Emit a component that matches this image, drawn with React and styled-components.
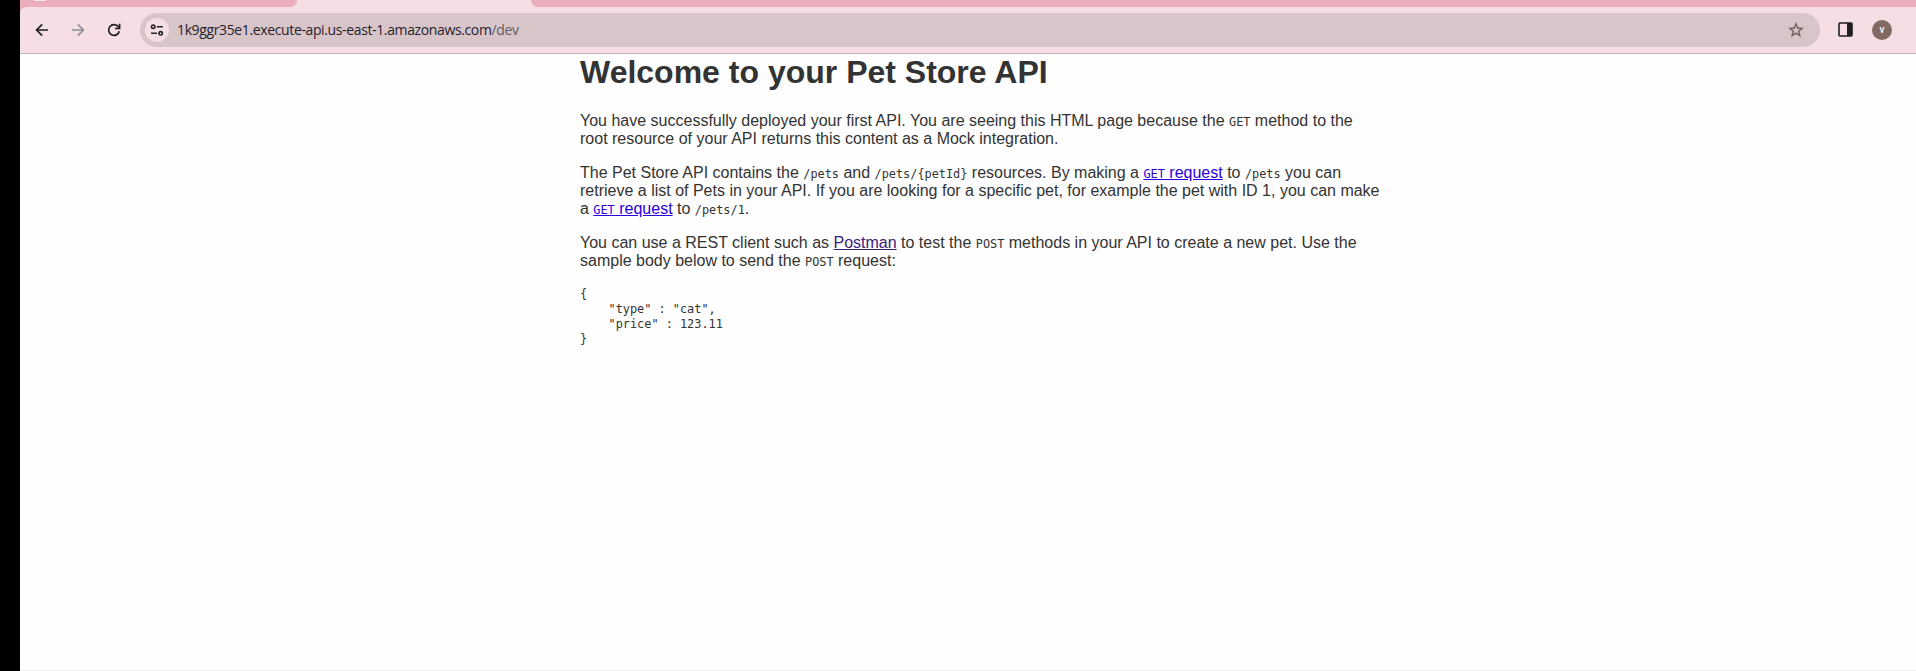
import React from "react";
import styled, { createGlobalStyle } from "styled-components";

const Global = createGlobalStyle`
  html, body { margin: 0; padding: 0; background: #fefefe; overflow: hidden; }
  * { box-sizing: border-box; }
`;

const Screen = styled.div`
  display: flex;
  width: 1916px;
  height: 671px;
  background: #000;
`;

const Browser = styled.div`
  display: flex;
  flex-direction: column;
  flex: 1;
  margin-left: 20px;
  background: #fefefe;
  border-bottom: 1px solid #efefef;
`;

const TabStrip = styled.div`
  display: flex;
  justify-content: space-between;
  height: 7px;
  background: #f6dfe4;
`;

const InactiveTabs = styled.div`
  width: ${(p) => p.$width}px;
  background: #e9adbc;
  border-radius: ${(p) => (p.$side === "left" ? "0 0 10px 0" : "0 0 0 10px")};
`;

const TabMark = styled.div`
  width: 12px;
  height: 1px;
  margin-left: 14px;
  background: #f8e6ea;
`;

const ToolbarBack = styled.div`
  background: linear-gradient(90deg, #e9adbc 12px, #f6dfe4 12px);
`;

const Toolbar = styled.div`
  display: flex;
  align-items: center;
  height: 47px;
  padding: 0 24px 1px 12px;
  background: #f6dfe4;
  border-bottom: 1px solid #c3b2b6;
  border-radius: 6px 0 0 0;
`;

const ToolButton = styled.div`
  display: flex;
  align-items: center;
  justify-content: center;
  width: 20px;
  height: 20px;
  margin-right: ${(p) => p.$gap ?? 16}px;
  color: ${(p) => p.$color || "#1f1f23"};
`;

const AddressBar = styled.div`
  display: flex;
  align-items: center;
  flex: 1;
  height: 34px;
  padding: 0 14px 0 5px;
  border-radius: 17px;
  background: #d8c5c9;
`;

const SiteInfo = styled.div`
  display: flex;
  align-items: center;
  justify-content: center;
  width: 24px;
  height: 24px;
  border-radius: 50%;
  background: #f6dfe4;
`;

const Url = styled.div`
  flex: 1;
  margin-left: 8px;
  font: 14px/20px "Open Sans", sans-serif;
  letter-spacing: -0.37px;
  color: #25222b;
  white-space: nowrap;
`;

const UrlPath = styled.span`
  color: #625c66;
`;

const SideTools = styled.div`
  display: flex;
  align-items: center;
  gap: 19px;
  margin-left: 18px;
`;

const Avatar = styled.div`
  width: 20px;
  height: 20px;
  border-radius: 50%;
  background: #806a61;
  color: #fff;
  font: 500 10px/19px Roboto, sans-serif;
  text-align: center;
`;

const Page = styled.main`
  width: 800px;
  margin-left: 560px;
  font: 16px/18px "Liberation Sans", Arial, sans-serif;
  color: #333;
`;

const Title = styled.h1`
  margin: 0 0 22px;
  font-size: 32px;
  line-height: 36px;
  font-weight: bold;
`;

const Paragraph = styled.p`
  margin: 0 0 16px;
`;

const Code = styled.code`
  font: 11.87px/1 "DejaVu Sans Mono", monospace;
`;

const Sample = styled.pre`
  margin: 0;
  padding-top: 1px;
  font: 11.87px/15px "DejaVu Sans Mono", monospace;
`;

const Link = styled.a`
  color: ${(p) => (p.$visited ? "#38217e" : "#2a00e0")};
  text-decoration: underline;
`;

const BackIcon = () => (
  <svg width="14" height="14" viewBox="0 0 14 14" fill="none" stroke="currentColor" strokeWidth="1.7">
    <path d="M13 7H2M7.2 1.4 1.6 7l5.6 5.6" />
  </svg>
);

const ForwardIcon = () => (
  <svg width="14" height="14" viewBox="0 0 14 14" fill="none" stroke="currentColor" strokeWidth="1.6">
    <path d="M1 7h11M6.8 1.4 12.4 7l-5.6 5.6" />
  </svg>
);

const ReloadIcon = () => (
  <svg width="14" height="14" viewBox="0 0 14 14" fill="none" stroke="currentColor" strokeWidth="1.7">
    <path d="M12.3 8.2A5.4 5.4 0 1 1 11.4 3.8L12.2 5" />
    <path d="M12.6 .8v4.7H8" />
  </svg>
);

const TuneIcon = () => (
  <svg width="14" height="12" viewBox="0 0 14 12" fill="none" stroke="#25222b" strokeWidth="1.6">
    <circle cx="3.2" cy="2.7" r="1.7" />
    <path d="M6.8 2.7H13M1 9.3h6" />
    <circle cx="10.7" cy="9.3" r="1.7" />
  </svg>
);

const StarIcon = () => (
  <svg width="18" height="18" viewBox="0 0 24 24" fill="#71655f" stroke="#71655f" strokeWidth=".5">
    <path d="M22 9.24l-7.19-.62L12 2 9.19 8.63 2 9.24l5.46 4.73L5.82 21 12 17.27 18.18 21l-1.63-7.03L22 9.24zM12 15.4l-3.76 2.27 1-4.28-3.32-2.88 4.38-.38L12 6.1l1.71 4.04 4.38.38-3.32 2.88 1 4.28L12 15.4z" />
  </svg>
);

const SidePanelIcon = () => (
  <svg width="15" height="15" viewBox="0 0 15 15">
    <rect x="1" y="1" width="13" height="13" rx="1" fill="none" stroke="#1f1f23" strokeWidth="1.6" />
    <path d="M9 1h5v13H9z" fill="#1f1f23" />
  </svg>
);

export default function App() {
  return (
    <Screen>
      <Global />
      <Browser>
        <TabStrip>
          <InactiveTabs $width={277} $side="left">
            <TabMark />
          </InactiveTabs>
          <InactiveTabs $width={1385} $side="right" />
        </TabStrip>
        <ToolbarBack>
          <Toolbar>
            <ToolButton><BackIcon /></ToolButton>
            <ToolButton $color="#8b8c98"><ForwardIcon /></ToolButton>
            <ToolButton><ReloadIcon /></ToolButton>
            <AddressBar>
              <SiteInfo><TuneIcon /></SiteInfo>
              <Url>1k9ggr35e1.execute-api.us-east-1.amazonaws.com<UrlPath>/dev</UrlPath></Url>
              <ToolButton $gap={0}><StarIcon /></ToolButton>
            </AddressBar>
            <SideTools>
              <SidePanelIcon />
              <Avatar>v</Avatar>
            </SideTools>
          </Toolbar>
        </ToolbarBack>
        <Page>
          <Title>Welcome to your Pet Store API</Title>
          <Paragraph>
            You have successfully deployed your first API. You are seeing this HTML page because the <Code>GET</Code> method to the root resource of your API returns this content as a Mock integration.
          </Paragraph>
          <Paragraph>
            The Pet Store API contains the <Code>/pets</Code> and <Code>{"/pets/{petId}"}</Code> resources. By making a <Link href="#"><Code>GET</Code> request</Link> to <Code>/pets</Code> you can retrieve a list of Pets in your API. If you are looking for a specific pet, for example the pet with ID 1, you can make a <Link href="#"><Code>GET</Code> request</Link> to <Code>/pets/1</Code>.
          </Paragraph>
          <Paragraph>
            You can use a REST client such as <Link href="#" $visited>Postman</Link> to test the <Code>POST</Code> methods in your API to create a new pet. Use the sample body below to send the <Code>POST</Code> request:
          </Paragraph>
          <Sample>{`{
    "type" : "cat",
    "price" : 123.11
}`}</Sample>
        </Page>
      </Browser>
    </Screen>
  );
}
